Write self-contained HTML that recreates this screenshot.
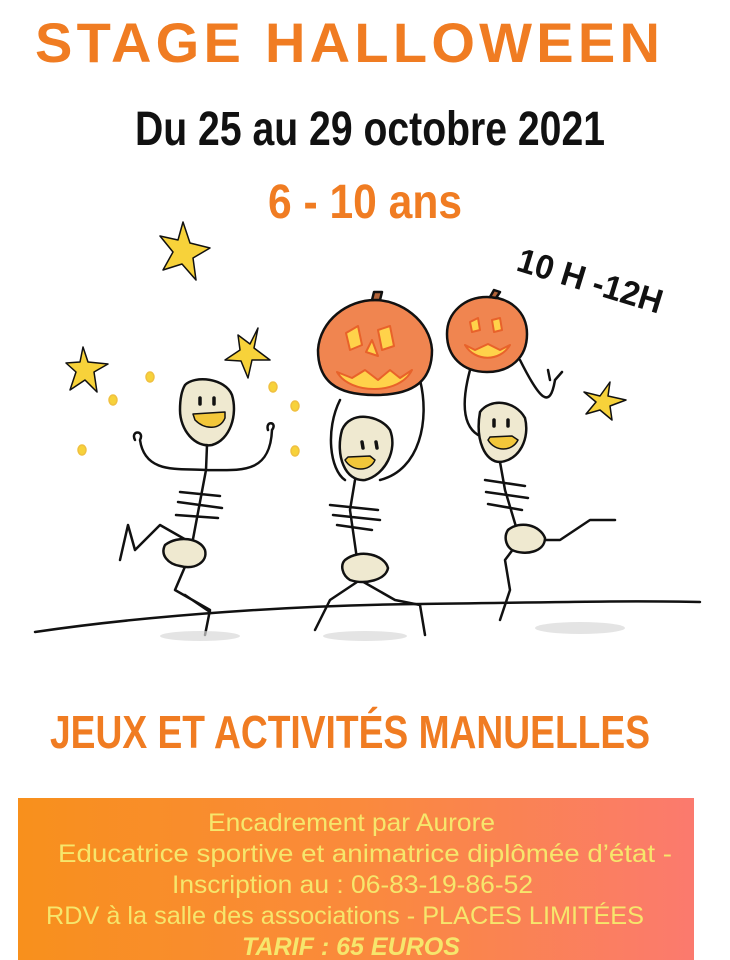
<!DOCTYPE html>
<html><head><meta charset="utf-8"><style>
html,body{margin:0;padding:0;background:#fff;width:730px;height:960px;overflow:hidden}
svg{display:block}
</style></head><body>
<svg width="730" height="960" viewBox="0 0 730 960" xmlns="http://www.w3.org/2000/svg">
<defs>
<linearGradient id="g" x1="0" x2="1" y1="0" y2="0">
<stop offset="0" stop-color="#f8901c"/><stop offset="0.5" stop-color="#fa8a3c"/><stop offset="1" stop-color="#fb7a6e"/>
</linearGradient>
</defs>
<text x="35" y="62" textLength="625" lengthAdjust="spacing" font-family="Liberation Sans, sans-serif" font-weight="bold" font-size="56" fill="#f07c22">STAGE HALLOWEEN</text>
<text x="135" y="145" textLength="470" lengthAdjust="spacingAndGlyphs" font-family="Liberation Sans Narrow, Liberation Sans, sans-serif" font-weight="bold" font-size="48" fill="#111">Du 25 au 29 octobre 2021</text>
<text x="268" y="218" textLength="194" lengthAdjust="spacingAndGlyphs" font-family="Liberation Sans Narrow, Liberation Sans, sans-serif" font-weight="bold" font-size="48" fill="#f07c22">6 - 10 ans</text>
<text x="515" y="270" transform="rotate(17 515 270)" textLength="150" lengthAdjust="spacingAndGlyphs" font-family="Liberation Sans Narrow, Liberation Sans, sans-serif" font-weight="bold" font-size="34" fill="#111">10 H -12H</text>

<g stroke="#111" stroke-width="2.5" fill="none" stroke-linecap="round" stroke-linejoin="round">
<path d="M35 632 C150 615 300 605 420 604 C520 603 620 600 700 602"/>
<path fill="#f7d23a" stroke-width="1.5" d="M183 222 L190 243 L210 248 L193 258 L196 280 L182 264 L163 270 L173 252 L160 236 L178 240 Z"/>
<path fill="#f7d23a" stroke-width="1.5" d="M83 347 L88 362 L108 364 L94 372 L97 392 L85 380 L70 390 L76 372 L66 363 L80 362 Z"/>
<path fill="#f7d23a" stroke-width="1.5" d="M258 328 L254 348 L270 360 L252 360 L248 378 L241 361 L225 360 L240 350 L238 335 L250 344 Z"/>
<path fill="#f7d23a" stroke-width="1.5" d="M610 382 L608 396 L626 400 L610 406 L612 420 L600 410 L586 414 L596 402 L584 392 L600 396 Z"/>
<g fill="#f7d23a" stroke="#f0c040" stroke-width="1.5">
<ellipse cx="150" cy="377" rx="4" ry="5"/><ellipse cx="113" cy="400" rx="4" ry="5"/><ellipse cx="82" cy="450" rx="4" ry="5"/>
<ellipse cx="273" cy="387" rx="4" ry="5"/><ellipse cx="295" cy="406" rx="4" ry="5"/><ellipse cx="295" cy="451" rx="4" ry="5"/>
</g>
<path fill="#efe9d0" d="M185 385 C195 375 225 378 232 395 C238 415 230 440 212 445 C195 448 180 430 180 410 C180 398 182 390 185 385 Z"/>
<path d="M207 445 L206 470 L190 555 L175 590 L210 610 L205 635 M206 470 C180 468 145 475 140 440 M206 470 C240 470 270 475 272 430 M135 440 C130 430 145 430 140 440 M268 430 C265 420 278 422 272 430 M180 492 L220 496 M178 502 L222 508 M176 515 L218 518 M195 545 L160 525 L135 550 L128 525 L120 560 M185 595 L210 612"/>
<path fill="#efe9d0" d="M165 545 C178 535 200 538 205 550 C208 562 195 570 180 566 C168 564 160 555 165 545 Z"/>
<path fill="#f2c73a" stroke-width="1.5" d="M195 420 C205 430 220 430 225 418 L225 412 L193 414 Z"/>
<path stroke-width="3.5" d="M200 398 L200 404 M214 398 L214 404"/>
<path d="M340 400 C325 430 330 470 345 480 M420 380 C430 420 420 470 380 480"/>
<path fill="#efe9d0" d="M342 430 C350 410 380 415 390 430 C398 450 385 475 365 480 C345 482 335 455 342 430 Z"/>
<path d="M355 480 L350 510 L360 580 L330 600 L315 630 M360 580 L395 600 L420 605 L425 635 M330 505 L378 510 M333 515 L380 520 M337 525 L372 530"/>
<path fill="#efe9d0" d="M345 560 C360 548 385 555 388 568 C386 580 365 585 350 580 C342 575 340 565 345 560 Z"/>
<path fill="#f2c73a" stroke-width="1.5" d="M345 460 C352 472 370 472 375 460 L370 456 L348 457 Z"/>
<path stroke-width="3.5" d="M362 442 L363 448 M376 442 L377 448"/>
<path fill="#f08550" d="M375 300 C400 300 430 320 432 350 C432 380 415 395 375 395 C335 395 318 380 318 350 C320 320 348 300 375 300 Z"/>
<path fill="#b3643a" d="M372 300 L374 292 L382 292 L380 300 Z"/>
<path fill="#ffd24a" stroke="#e8622a" stroke-width="2" d="M337 372 C350 395 400 395 412 370 L400 378 L390 370 L378 380 L365 370 L352 378 Z"/>
<path fill="#ffd24a" stroke="#e8622a" stroke-width="2" d="M346 333 L358 326 L362 345 L350 350 Z M378 330 L390 326 L394 346 L382 350 Z M366 352 L372 340 L378 356 Z"/>
<path d="M470 370 C462 400 462 425 478 435 M520 360 C540 400 550 410 555 380 M550 380 L548 370 M555 380 L562 372"/>
<path fill="#efe9d0" d="M480 412 C490 398 515 400 525 418 C530 438 520 460 500 462 C485 462 475 440 480 412 Z"/>
<path d="M500 462 L505 490 L520 540 L505 560 L510 590 L500 620 M520 540 L560 540 L590 520 L615 520 M485 480 L525 486 M486 492 L528 498 M488 504 L522 510"/>
<path fill="#efe9d0" d="M508 530 C520 520 540 525 545 538 C545 552 525 556 512 550 C505 545 504 536 508 530 Z"/>
<path fill="#f2c73a" stroke-width="1.5" d="M488 440 C495 452 512 452 518 440 L512 436 L490 437 Z"/>
<path stroke-width="3.5" d="M494 420 L494 426 M508 420 L508 426"/>
<path fill="#f08550" d="M487 297 C510 297 527 312 527 334 C527 358 510 372 487 372 C462 372 447 356 447 334 C447 312 465 297 487 297 Z"/>
<path fill="#b3643a" d="M490 297 L494 290 L500 292 L496 298 Z"/>
<path fill="#ffd24a" stroke="#e8622a" stroke-width="2" d="M465 345 C475 362 500 362 510 345 L500 350 L488 344 L475 350 Z M470 322 L478 318 L480 330 L472 332 Z M492 320 L500 318 L502 330 L494 332 Z"/>
</g>
<g fill="#d8d8d8" opacity="0.7">
<ellipse cx="200" cy="636" rx="40" ry="5"/><ellipse cx="365" cy="636" rx="42" ry="5"/><ellipse cx="580" cy="628" rx="45" ry="6"/>
</g>

<text x="50" y="748" textLength="600" lengthAdjust="spacingAndGlyphs" font-family="Liberation Sans Narrow, Liberation Sans, sans-serif" font-weight="bold" font-size="46" fill="#f07c22">JEUX ET ACTIVITÉS MANUELLES</text>

<rect x="18" y="798" width="676" height="162" fill="url(#g)"/>
<g font-family="Liberation Sans Narrow, Liberation Sans, sans-serif" font-size="25" fill="#f6e66c">
<text x="208" y="831" textLength="287" lengthAdjust="spacingAndGlyphs">Encadrement par Aurore</text>
<text x="58" y="862" textLength="614" lengthAdjust="spacingAndGlyphs">Educatrice sportive et animatrice diplômée d’état -</text>
<text x="172" y="893" textLength="361" lengthAdjust="spacingAndGlyphs">Inscription au : 06-83-19-86-52</text>
<text x="46" y="924" textLength="598" lengthAdjust="spacingAndGlyphs">RDV à la salle des associations - PLACES LIMITÉES</text>
<text x="242" y="955" textLength="218" lengthAdjust="spacingAndGlyphs" font-weight="bold" font-style="italic">TARIF : 65 EUROS</text>
</g>
</svg>
</body></html>
